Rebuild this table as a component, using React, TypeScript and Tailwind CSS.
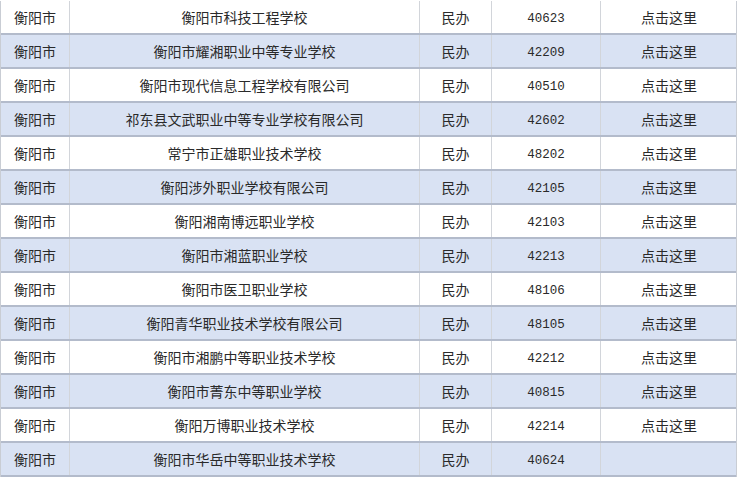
const rows: [string, string, string, string, boolean][] = [
  ["衡阳市", "衡阳市科技工程学校", "民办", "40623", true],
  ["衡阳市", "衡阳市耀湘职业中等专业学校", "民办", "42209", true],
  ["衡阳市", "衡阳市现代信息工程学校有限公司", "民办", "40510", true],
  ["衡阳市", "祁东县文武职业中等专业学校有限公司", "民办", "42602", true],
  ["衡阳市", "常宁市正雄职业技术学校", "民办", "48202", true],
  ["衡阳市", "衡阳涉外职业学校有限公司", "民办", "42105", true],
  ["衡阳市", "衡阳湘南博远职业学校", "民办", "42103", true],
  ["衡阳市", "衡阳市湘蓝职业学校", "民办", "42213", true],
  ["衡阳市", "衡阳市医卫职业学校", "民办", "48106", true],
  ["衡阳市", "衡阳青华职业技术学校有限公司", "民办", "48105", true],
  ["衡阳市", "衡阳市湘鹏中等职业技术学校", "民办", "42212", true],
  ["衡阳市", "衡阳市菁东中等职业学校", "民办", "40815", true],
  ["衡阳市", "衡阳万博职业技术学校", "民办", "42214", true],
  ["衡阳市", "衡阳市华岳中等职业技术学校", "民办", "40624", false],
];

export default function App() {
  return (
    <div className="w-[739px] h-[479px] overflow-hidden bg-white pt-[1px] text-[14px] text-[#2a2a2a] [font-family:'Noto_Sans_CJK_SC',sans-serif]">
      <div className="w-[737px] border-l border-r border-[#c9cdd4]">
        {rows.map(([city, name, type, code, link], i) => (
          <div
            key={i}
            className={`grid h-[34px] grid-cols-[69px_350px_72px_109px_136px] border-b-2 border-[#b3bbcb] ${
              i % 2 === 1 ? "bg-[#d9e2f3]" : "bg-white"
            }`}
          >
            <div className="flex items-center justify-center border-r border-[#d2d5da] pt-[1px]">{city}</div>
            <div className="flex items-center justify-center border-r border-[#d2d5da] pt-[1px]">{name}</div>
            <div className="flex items-center justify-center border-r border-[#d2d5da] pt-[1px]">{type}</div>
            <div className="flex items-center justify-center border-r border-[#d2d5da] pt-[5px] text-[12.5px] leading-none [font-family:'Liberation_Mono',monospace]">
              {code}
            </div>
            <div className="flex items-center justify-center pt-[1px]">{link ? "点击这里" : ""}</div>
          </div>
        ))}
      </div>
    </div>
  );
}
